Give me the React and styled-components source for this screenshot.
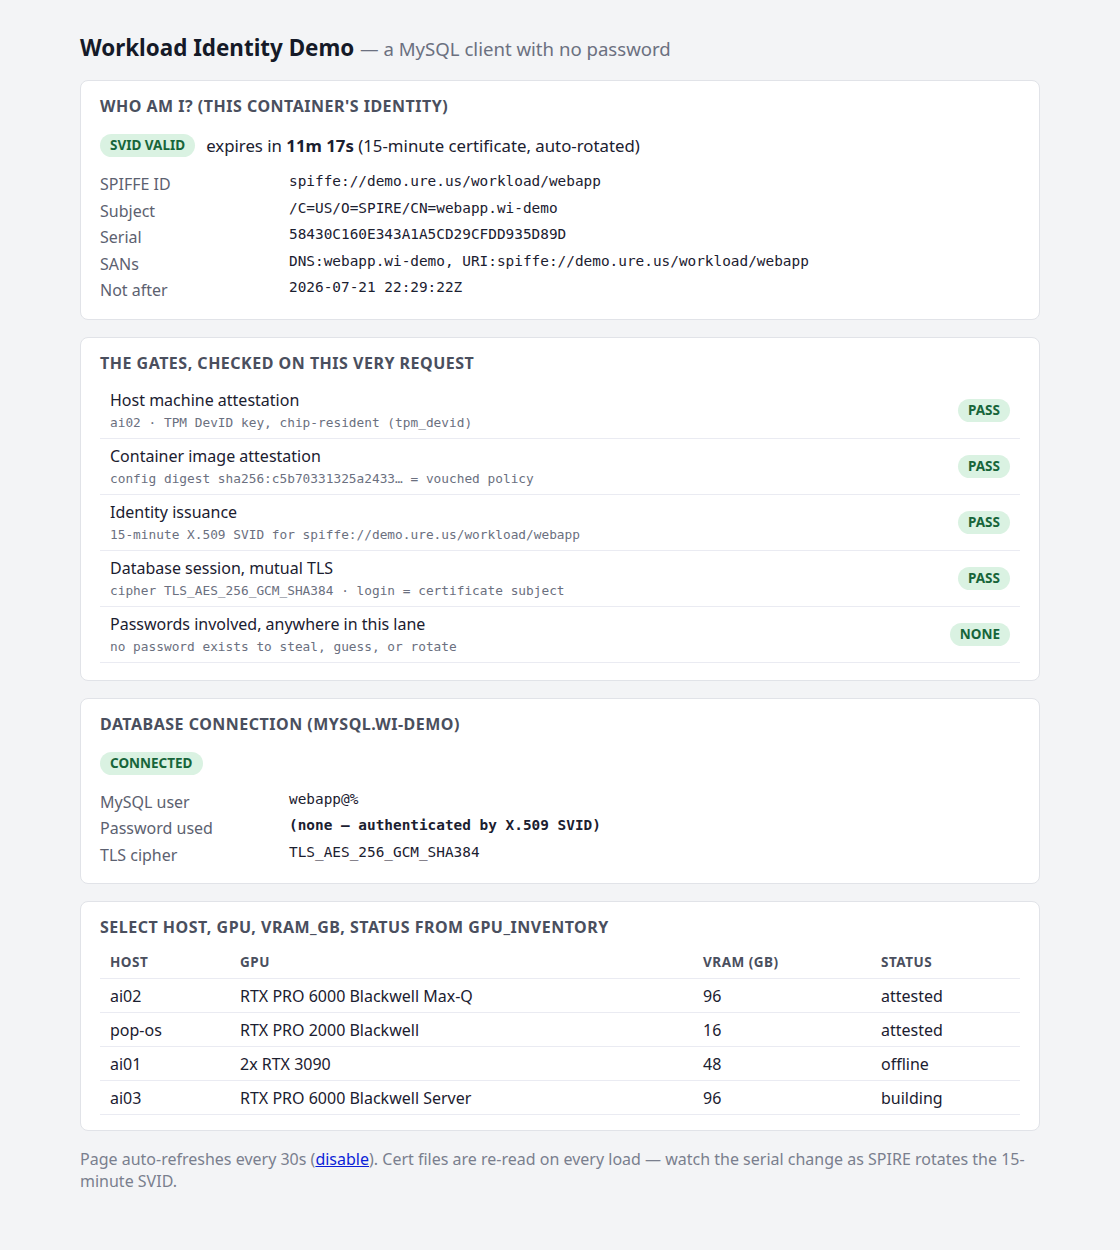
import styled, { createGlobalStyle } from 'styled-components';

const GlobalStyle = createGlobalStyle`
  body {
    margin: 0;
    background: #f3f4f6;
    color: #1b2030;
    font-family: "Noto Sans", "Open Sans", sans-serif;
  }
`;

const identity = [
  ['SPIFFE ID', 'spiffe://demo.ure.us/workload/webapp'],
  ['Subject', '/C=US/O=SPIRE/CN=webapp.wi-demo'],
  ['Serial', '58430C160E343A1A5CD29CFDD935D89D'],
  ['SANs', 'DNS:webapp.wi-demo, URI:spiffe://demo.ure.us/workload/webapp'],
  ['Not after', '2026-07-21 22:29:22Z'],
];

const gates = [
  {
    title: 'Host machine attestation',
    detail: 'ai02 · TPM DevID key, chip-resident (tpm_devid)',
    result: 'PASS',
  },
  {
    title: 'Container image attestation',
    detail: 'config digest sha256:c5b70331325a2433… = vouched policy',
    result: 'PASS',
  },
  {
    title: 'Identity issuance',
    detail: '15-minute X.509 SVID for spiffe://demo.ure.us/workload/webapp',
    result: 'PASS',
  },
  {
    title: 'Database session, mutual TLS',
    detail: 'cipher TLS_AES_256_GCM_SHA384 · login = certificate subject',
    result: 'PASS',
  },
  {
    title: 'Passwords involved, anywhere in this lane',
    detail: 'no password exists to steal, guess, or rotate',
    result: 'NONE',
  },
];

const inventory = [
  ['ai02', 'RTX PRO 6000 Blackwell Max-Q', '96', 'attested'],
  ['pop-os', 'RTX PRO 2000 Blackwell', '16', 'attested'],
  ['ai01', '2x RTX 3090', '48', 'offline'],
  ['ai03', 'RTX PRO 6000 Blackwell Server', '96', 'building'],
];

function App() {
  return (
    <>
      <GlobalStyle />
      <Page>
        <Title>
          Workload Identity Demo <Tagline>— a MySQL client with no password</Tagline>
        </Title>

        <Card>
          <CardHeading>Who am I? (this container's identity)</CardHeading>
          <StatusLine>
            <Badge>SVID VALID</Badge>
            <span>
              expires in <strong>11m 17s</strong> (15-minute certificate, auto-rotated)
            </span>
          </StatusLine>
          <KeyValues>
            {identity.map(([k, v]) => (
              <KvRow key={k}>
                <KvLabel>{k}</KvLabel>
                <KvValue>{v}</KvValue>
              </KvRow>
            ))}
          </KeyValues>
        </Card>

        <Card>
          <CardHeading>The gates, checked on this very request</CardHeading>
          <GateList>
            {gates.map((g) => (
              <Gate key={g.title}>
                <GateText>
                  <GateTitle>{g.title}</GateTitle>
                  <GateDetail>{g.detail}</GateDetail>
                </GateText>
                <Badge>{g.result}</Badge>
              </Gate>
            ))}
          </GateList>
        </Card>

        <Card>
          <CardHeading>Database connection (mysql.wi-demo)</CardHeading>
          <StatusLine>
            <Badge>CONNECTED</Badge>
          </StatusLine>
          <KeyValues>
            <KvRow>
              <KvLabel>MySQL user</KvLabel>
              <KvValue>webapp@%</KvValue>
            </KvRow>
            <KvRow>
              <KvLabel>Password used</KvLabel>
              <KvValue $bold>(none — authenticated by X.509 SVID)</KvValue>
            </KvRow>
            <KvRow>
              <KvLabel>TLS cipher</KvLabel>
              <KvValue>TLS_AES_256_GCM_SHA384</KvValue>
            </KvRow>
          </KeyValues>
        </Card>

        <Card>
          <CardHeading>SELECT host, gpu, vram_gb, status FROM gpu_inventory</CardHeading>
          <Table>
            <thead>
              <tr>
                <Th $w={130}>Host</Th>
                <Th $w={463}>GPU</Th>
                <Th $w={178}>VRAM (GB)</Th>
                <Th>Status</Th>
              </tr>
            </thead>
            <tbody>
              {inventory.map((row) => (
                <tr key={row[0]}>
                  {row.map((cell, i) => (
                    <Td key={i}>{cell}</Td>
                  ))}
                </tr>
              ))}
            </tbody>
          </Table>
        </Card>

        <Footer>
          Page auto-refreshes every 30s (<a href="#">disable</a>). Cert files are re-read on
          every load — watch the serial change as SPIRE rotates the 15-minute SVID.
        </Footer>
      </Page>
    </>
  );
}

export default App;

const Page = styled.main`
  width: 960px;
  margin: 0 auto;
  padding: 33px 0 40px;
  display: flex;
  flex-direction: column;
  gap: 17px;
`;

const Title = styled.h1`
  margin: 0 0 -1px;
  font-size: 22.4px;
  font-weight: 700;
  line-height: 30px;
  color: #151a28;
`;

const Tagline = styled.span`
  font-size: 18.6px;
  font-weight: 400;
  color: #6b7080;
`;

const Card = styled.section`
  background: #ffffff;
  border: 1px solid #e1e3e8;
  border-radius: 8px;
  padding: 15px 19px 15px;
`;

const CardHeading = styled.h2`
  margin: 0 0 10px;
  font-size: 16px;
  line-height: 20px;
  font-weight: 700;
  letter-spacing: 0.5px;
  text-transform: uppercase;
  color: #4a4f5e;
`;

const StatusLine = styled.div`
  display: flex;
  align-items: center;
  gap: 11px;
  font-size: 16.8px;
  line-height: 23px;
  margin: 18px 0 14px;

  strong {
    font-weight: 700;
  }
`;

const Badge = styled.span`
  display: inline-block;
  flex-shrink: 0;
  padding: 2px 10px;
  border-radius: 12px;
  background: #daf2e2;
  color: #17653a;
  font-size: 13.5px;
  line-height: 19px;
  font-weight: 700;
`;

const KeyValues = styled.div`
  display: flex;
  flex-direction: column;
`;

const KvRow = styled.div`
  display: grid;
  grid-template-columns: 189px 1fr;
  align-items: center;
  height: 26.5px;
`;

const KvLabel = styled.span`
  font-size: 16px;
  line-height: 22px;
  color: #5c6170;
`;

const KvValue = styled.span`
  font-family: "DejaVu Sans Mono", monospace;
  font-size: 14.4px;
  line-height: 20px;
  position: relative;
  top: -3px;
  color: #1b2030;
  font-weight: ${(p) => (p.$bold ? 700 : 400)};
`;

const GateList = styled.div`
  display: flex;
  flex-direction: column;
  margin-bottom: 2px;
`;

const Gate = styled.div`
  display: flex;
  align-items: center;
  justify-content: space-between;
  padding: 6px 10px 6px;
  border-bottom: 1px solid #eaebf2;
`;

const GateText = styled.div`
  display: flex;
  flex-direction: column;
`;

const GateTitle = styled.span`
  font-size: 16px;
  line-height: 22px;
  color: #1b2030;
`;

const GateDetail = styled.span`
  font-family: "DejaVu Sans Mono", monospace;
  font-size: 12.8px;
  line-height: 18px;
  margin-top: 3px;
  color: #6b7080;
`;

const Table = styled.table`
  width: 100%;
  border-collapse: collapse;
`;

const Th = styled.th`
  box-sizing: border-box;
  width: ${(p) => (p.$w ? `${p.$w}px` : 'auto')};
  text-align: left;
  padding: 6px 10px 7px;
  font-size: 13.5px;
  line-height: 18px;
  font-weight: 700;
  letter-spacing: 0.5px;
  text-transform: uppercase;
  color: #4a4f5e;
  border-bottom: 1px solid #eaebf2;
`;

const Td = styled.td`
  padding: 6px 10px 5px;
  font-size: 16px;
  line-height: 22px;
  color: #1b2030;
  border-bottom: 1px solid #eaebf2;
`;

const Footer = styled.p`
  margin: 0;
  font-size: 16px;
  line-height: 22px;
  color: #7a7f8e;

  a {
    color: #0b1fd8;
  }
`;
